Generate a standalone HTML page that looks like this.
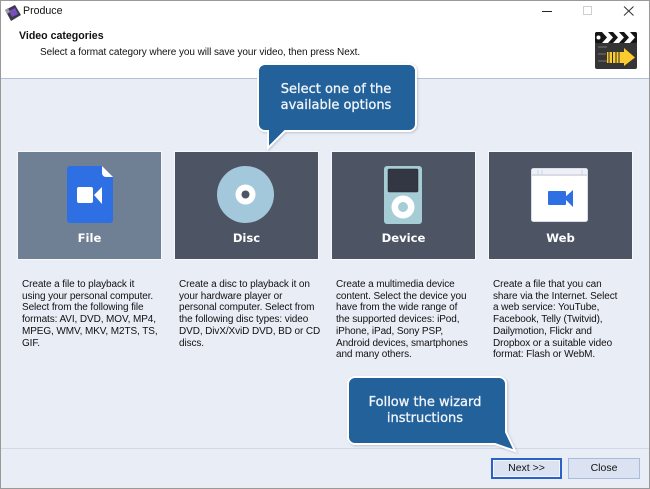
<!DOCTYPE html>
<html><head><meta charset="utf-8"><style>
html,body{margin:0;padding:0}
body{width:650px;height:489px;position:relative;overflow:hidden;background:#fff;font-family:"Liberation Sans",sans-serif;color:#111}
div{position:absolute;box-sizing:border-box}
.t{white-space:pre;font-size:10px;line-height:12px}
.card{top:152px;width:143px;height:107px;background:#4d5464;outline:1px solid #f6f8fc}
.lab{left:0;width:100%;top:79px;text-align:center;color:#fff;font:bold 11.6px "DejaVu Sans",sans-serif;line-height:15px}
.desc{top:279px;font-size:10px;letter-spacing:-.1px;line-height:11.7px;white-space:pre;color:#111}
.co{color:#f2f5fa;font:13px/16px "DejaVu Sans",sans-serif;text-align:center;left:0;width:100%;-webkit-text-stroke:.3px #f2f5fa}
.btn{top:458px;height:21px;font-size:10.5px;line-height:20px;text-align:center;background:#dbe2f1;color:#111}
svg{position:absolute;left:0;top:0}
</style></head><body>
<div style="left:1px;top:78px;width:648px;height:410px;background:#e9edf6;border-top:1px solid #b4c0da"></div>
<div style="left:1px;top:448px;width:648px;height:1px;background:#d2d9e8"></div>
<div style="left:0;top:0;width:650px;height:489px;border:1px solid #999"></div>

<svg width="20" height="20" style="left:3px;top:3px" viewBox="0 0 20 20"><path d="M2 7 12 2 18 12 8 18Z" fill="#3a3a48"/><path d="M6 8 12 5 15 11 9 14Z" fill="#7a4fc0"/><path d="M2 7 5 5 7 9 4 11Z" fill="#9a9aa5"/></svg>
<div class="t" style="left:23px;top:5px;font-size:10.6px">Produce</div>
<div style="left:542px;top:10.500px;width:10px;height:1px;background:#222"></div>
<div style="left:583px;top:6px;width:9px;height:9px;border:1px solid #cfcfcf"></div>
<svg width="650" height="40"><path d="M624 6.500 633.500 15.500M633.500 6.500 624 15.500" stroke="#333" stroke-width="1" fill="none"/></svg>
<div class="t" style="left:19px;top:30px;font-weight:bold;font-size:10.6px">Video categories</div>
<div class="t" style="left:40px;top:47px;font-size:10px;letter-spacing:-.07px">Select a format category where you will save your video, then press Next.</div>

<svg width="42" height="37" style="left:595px;top:32px" viewBox="0 0 42 37">
<rect x="0" y="0" width="42" height="37" rx="2" fill="#353535"/>
<rect x="0" y="0" width="42" height="11" rx="2" fill="#151515"/>
<path d="M7 0h6l5 5.500-5 5.500H7l5-5.500zM18 0h6l5 5.500-5 5.500h-6l5-5.500zM29 0h6l5 5.500-5 5.500h-6l5-5.500z" fill="#fff"/>
<circle cx="3.500" cy="5.500" r="2" fill="#fff"/>
<path d="M3 15h9M3 22h8M3 29h9" stroke="#777" stroke-width="1"/>
<path d="M12 20H29V16L40 25.500 29 34V31H12Z" fill="#fccb2e"/>
<path d="M14 20v11M17.500 20v11M21 20v11M24 20v11" stroke="#2d2d2d" stroke-width="1"/>
</svg>

<div class="card" style="left:18px;background:#6f7f94">
<svg width="143" height="107"><path d="M52 14H84L95 25V68a3 3 0 0 1-3 3H52a3 3 0 0 1-3-3V17a3 3 0 0 1 3-3Z" fill="#2f6fe4"/><path d="M84 14 95 25H88a4 4 0 0 1-4-4Z" fill="#fff"/><rect x="59" y="35" width="16" height="16" rx="2" fill="#fff"/><path d="M76 43 84 35V52Z" fill="#fff"/></svg>
<div class="lab">File</div></div>

<div class="card" style="left:175px">
<svg width="143" height="107"><circle cx="70.500" cy="42.500" r="28.500" fill="#a3c8db"/><circle cx="70.500" cy="42.500" r="10" fill="#fff"/><circle cx="70.500" cy="42.500" r="4" fill="#4d5464"/></svg>
<div class="lab">Disc</div></div>

<div class="card" style="left:332px">
<svg width="143" height="107"><rect x="52" y="14" width="38" height="58" rx="3" fill="#a6cdd6"/><rect x="56" y="17" width="30" height="23" rx="1" fill="#333744" stroke="#222" stroke-width=".5"/><circle cx="71" cy="55" r="11.500" fill="#fff"/><circle cx="71" cy="55" r="5" fill="#a6cdd6"/></svg>
<div class="lab">Device</div></div>

<div class="card" style="left:489px">
<svg width="143" height="107"><rect x="42.500" y="16.500" width="56" height="53" rx="2" fill="#fff" stroke="#d8dce8"/><rect x="43" y="17" width="55" height="6" fill="#eef0f6"/><rect x="43" y="22" width="55" height="2" fill="#d8dce8"/><path d="M49 18v5M53 18v5M93 18v5" stroke="#cfd4e2"/><rect x="59" y="39" width="18" height="14" rx="1" fill="#2f6fe4"/><path d="M75 46 84 38V55Z" fill="#2f6fe4"/></svg>
<div class="lab">Web</div></div>

<div class="desc" style="left:22px">Create a file to playback it
using your personal computer.
Select from the following file
formats: AVI, DVD, MOV, MP4,
MPEG, WMV, MKV, M2TS, TS,
GIF.</div>
<div class="desc" style="left:179px">Create a disc to playback it on
your hardware player or
personal computer. Select from
the following disc types: video
DVD, DivX/XviD DVD, BD or CD
discs.</div>
<div class="desc" style="left:336px">Create a multimedia device
content. Select the device you
have from the wide range of
the supported devices: iPod,
iPhone, iPad, Sony PSP,
Android devices, smartphones
and many others.</div>
<div class="desc" style="left:493px">Create a file that you can
share via the Internet. Select
a web service: YouTube,
Facebook, Telly (Twitvid),
Dailymotion, Flickr and
Dropbox or a suitable video
format: Flash or WebM.</div>

<div class="btn" style="left:491px;width:71px;border:2px solid #2a62c8;box-shadow:inset 0 0 0 1px #f4f6fb;line-height:17px">Next &gt;&gt;</div>
<div class="btn" style="left:568px;width:72px;border:1px solid #a9bcdc;line-height:19px">Close</div>

<svg width="650" height="489" style="filter:drop-shadow(1px 1px 1px rgba(90,100,120,.3))"><path d="M265 64H409a7 7 0 0 1 7 7V124a7 7 0 0 1-7 7H285L268 148V131H265a7 7 0 0 1-7-7V71a7 7 0 0 1 7-7Z" fill="#23619b" stroke="#fff" stroke-width="2"/><path d="M355 377H499a7 7 0 0 1 7 7V432L515 451 495 444H355a7 7 0 0 1-7-7V384a7 7 0 0 1 7-7Z" fill="#23619b" stroke="#fff" stroke-width="2"/></svg>
<div style="left:257px;top:82px;width:158px;height:34px"><div class="co">Select one of the<br>available options</div></div>
<div style="left:346px;top:395px;width:158px;height:34px"><div class="co">Follow the wizard<br>instructions</div></div>
</body></html>
